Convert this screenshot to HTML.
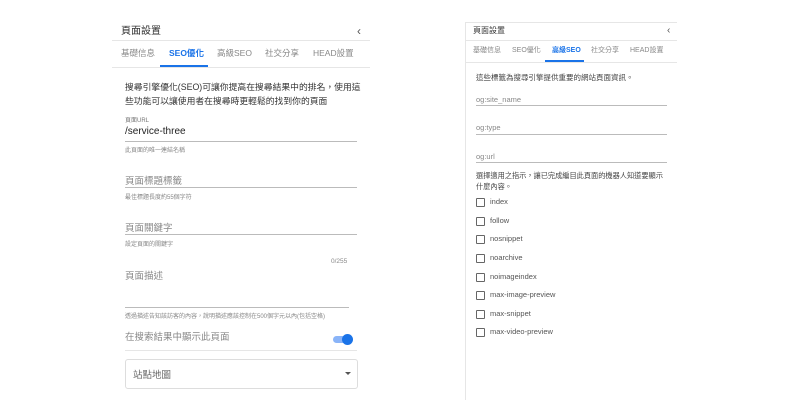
<!DOCTYPE html>
<html><head><meta charset="utf-8"><style>
*{margin:0;padding:0;box-sizing:border-box}
body{width:800px;height:420px;background:#fff;position:relative;overflow:hidden;font-family:"Liberation Sans","Noto Sans CJK TC",sans-serif;color:#333}
.a{position:absolute;white-space:nowrap}
.l{position:absolute;height:1px;background:#e6e6e6}
.u{position:absolute;height:1px;background:#bbb}
.cb{position:absolute;width:9px;height:9px;border:1.3px solid #666;border-radius:1px}
</style></head><body>
<!-- left panel -->
<div class="a" style="left:121px;top:22px;font-size:10px;color:#333">頁面設置</div>
<div class="a" style="left:357px;top:24px;font-size:12px;color:#555">‹</div>
<div class="l" style="left:112px;top:40px;width:258px"></div>
<div class="a" style="left:121px;top:47px;font-size:8.5px;color:#888">基礎信息</div>
<div class="a" style="left:169px;top:47px;font-size:8.5px;color:#1a73e8;font-weight:bold">SEO優化</div>
<div class="a" style="left:217px;top:47px;font-size:8.5px;color:#888">高級SEO</div>
<div class="a" style="left:265px;top:47px;font-size:8.5px;color:#888">社交分享</div>
<div class="a" style="left:313px;top:47px;font-size:8.5px;color:#888">HEAD設置</div>
<div class="a" style="left:160px;top:65px;width:48px;height:2px;background:#1a73e8"></div>
<div class="l" style="left:112px;top:67px;width:258px"></div>
<div class="a" style="left:125px;top:80px;font-size:8.8px;line-height:14px;color:#333">搜尋引擎優化(SEO)可讓你提高在搜尋結果中的排名，使用這<br>些功能可以讓使用者在搜尋時更輕鬆的找到你的頁面</div>
<div class="a" style="left:125px;top:115px;font-size:6px;color:#777">頁面URL</div>
<div class="a" style="left:125px;top:126px;font-size:10px;color:#222">/service-three</div>
<div class="u" style="left:125px;top:141px;width:232px"></div>
<div class="a" style="left:125px;top:145px;font-size:6px;color:#888">此頁面的唯一連結名稱</div>
<div class="a" style="left:125px;top:173px;font-size:9.5px;color:#888">頁面標題標籤</div>
<div class="u" style="left:125px;top:187px;width:232px"></div>
<div class="a" style="left:125px;top:192px;font-size:6px;color:#888">最佳標題長度約55個字符</div>
<div class="a" style="left:125px;top:220px;font-size:9.5px;color:#888">頁面關鍵字</div>
<div class="u" style="left:125px;top:234px;width:232px"></div>
<div class="a" style="left:125px;top:239px;font-size:6px;color:#888">設定頁面的關鍵字</div>
<div class="a" style="left:331px;top:258px;font-size:6.5px;color:#888">0/255</div>
<div class="a" style="left:125px;top:268px;font-size:9.5px;color:#888">頁面描述</div>
<div class="u" style="left:125px;top:307px;width:224px"></div>
<div class="a" style="left:125px;top:311px;font-size:6px;color:#888">透過描述告知該訪客的內容，說明描述應該控制在500個字元以內(包括空格)</div>
<div class="a" style="left:125px;top:329px;font-size:9.5px;color:#888">在搜索結果中顯示此頁面</div>
<div class="a" style="left:333px;top:336px;width:18px;height:7px;border-radius:4px;background:#8ab4f8"></div>
<div class="a" style="left:342px;top:334px;width:11px;height:11px;border-radius:50%;background:#1a73e8"></div>
<div class="l" style="left:125px;top:350px;width:232px"></div>
<div class="a" style="left:125px;top:359px;width:233px;height:30px;border:1px solid #ddd;border-radius:3px"></div>
<div class="a" style="left:133px;top:367px;font-size:9.5px;color:#666">站點地圖</div>
<div class="a" style="left:345px;top:372px;width:0;height:0;border-left:3px solid transparent;border-right:3px solid transparent;border-top:3px solid #555"></div>
<!-- right panel -->
<div class="a" style="left:465px;top:22px;width:1px;height:378px;background:#e6e6e6"></div>
<div class="l" style="left:465px;top:22px;width:212px"></div>
<div class="a" style="left:473px;top:25px;font-size:8px;color:#333">頁面設置</div>
<div class="a" style="left:667px;top:25px;font-size:10px;color:#555">‹</div>
<div class="l" style="left:465px;top:40px;width:212px"></div>
<div class="a" style="left:473px;top:45px;font-size:7px;color:#888">基礎信息</div>
<div class="a" style="left:512px;top:45px;font-size:7px;color:#888">SEO優化</div>
<div class="a" style="left:552px;top:45px;font-size:7px;color:#1a73e8;font-weight:bold">高級SEO</div>
<div class="a" style="left:591px;top:45px;font-size:7px;color:#888">社交分享</div>
<div class="a" style="left:630px;top:45px;font-size:7px;color:#888">HEAD設置</div>
<div class="a" style="left:545px;top:60px;width:39px;height:2px;background:#1a73e8"></div>
<div class="l" style="left:465px;top:62px;width:212px"></div>
<div class="a" style="left:476px;top:72px;font-size:7.5px;color:#444">這些標籤為搜尋引擎提供重要的網站頁面資訊。</div>
<div class="a" style="left:476px;top:95px;font-size:7.5px;color:#888">og:site_name</div>
<div class="u" style="left:476px;top:105px;width:191px"></div>
<div class="a" style="left:476px;top:123px;font-size:7.5px;color:#888">og:type</div>
<div class="u" style="left:476px;top:134px;width:191px"></div>
<div class="a" style="left:476px;top:152px;font-size:7.5px;color:#888">og:url</div>
<div class="u" style="left:476px;top:162px;width:191px"></div>
<div class="a" style="left:476px;top:170px;font-size:7.2px;line-height:11px;color:#444">選擇適用之指示，讓已完成編目此頁面的機器人知道要顯示<br>什麼內容。</div>
<div class="cb" style="left:476px;top:198px"></div><div class="a" style="left:490px;top:197px;font-size:7.5px;color:#555">index</div>
<div class="cb" style="left:476px;top:217px"></div><div class="a" style="left:490px;top:216px;font-size:7.5px;color:#555">follow</div>
<div class="cb" style="left:476px;top:235px"></div><div class="a" style="left:490px;top:234px;font-size:7.5px;color:#555">nosnippet</div>
<div class="cb" style="left:476px;top:254px"></div><div class="a" style="left:490px;top:253px;font-size:7.5px;color:#555">noarchive</div>
<div class="cb" style="left:476px;top:273px"></div><div class="a" style="left:490px;top:272px;font-size:7.5px;color:#555">noimageindex</div>
<div class="cb" style="left:476px;top:291px"></div><div class="a" style="left:490px;top:290px;font-size:7.5px;color:#555">max-image-preview</div>
<div class="cb" style="left:476px;top:310px"></div><div class="a" style="left:490px;top:309px;font-size:7.5px;color:#555">max-snippet</div>
<div class="cb" style="left:476px;top:328px"></div><div class="a" style="left:490px;top:327px;font-size:7.5px;color:#555">max-video-preview</div>
</body></html>
